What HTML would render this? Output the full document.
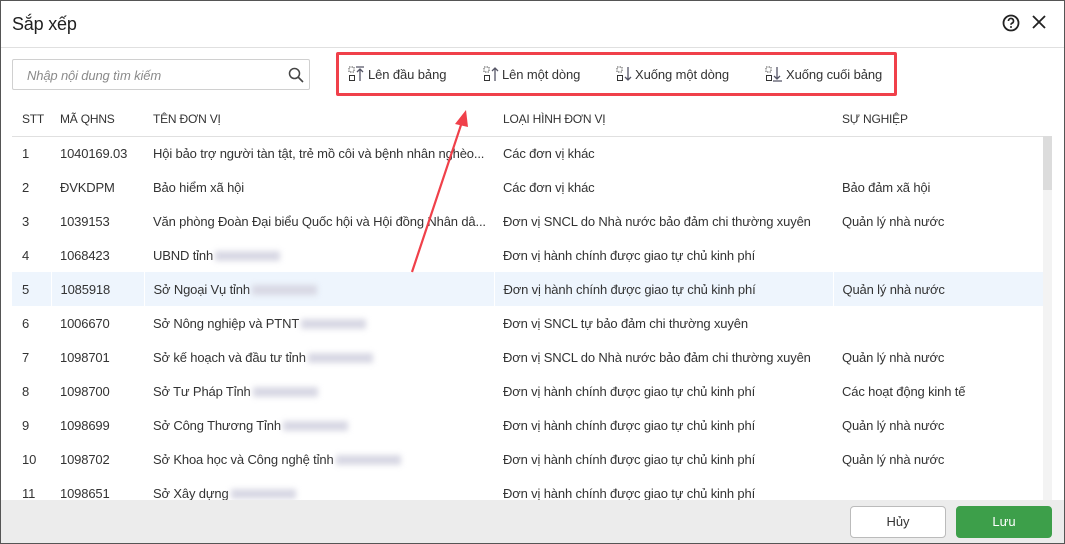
<!DOCTYPE html>
<html><head><meta charset="utf-8"><style>
*{box-sizing:border-box;margin:0;padding:0}
body{width:1065px;height:544px;overflow:hidden;background:#fff;font-family:"Liberation Sans",sans-serif;color:#212121;font-size:13px;position:relative}
.frame{position:absolute;left:0;top:0;width:1065px;height:544px;border:1px solid #555}
.title{position:absolute;left:12px;top:14px;font-size:18px;color:#212121;letter-spacing:-0.2px}
.hline{position:absolute;left:1px;right:1px;top:47px;border-top:1px solid #e0e0e0}
.search{position:absolute;left:12px;top:59px;width:298px;height:31px;border:1px solid #d0d0d0;border-radius:2px}
.search span{position:absolute;left:14px;top:8px;font-style:italic;color:#8a8a8a;font-size:13px;letter-spacing:-0.15px}
.tb{position:absolute;left:336px;top:52px;width:561px;height:44px;border:3px solid #f0404a;border-radius:2px}
.tbi{position:absolute;top:66px;font-size:13px;color:#333;display:flex;align-items:center;letter-spacing:-0.1px}
.tbi svg{margin-right:2px}
table{position:absolute;left:12px;top:102px;width:1031px;border-collapse:collapse;table-layout:fixed}
th{height:34px;text-align:left;font-weight:normal;font-size:12px;color:#333;padding-left:9px;border-bottom:1px solid #e0e0e0;letter-spacing:-0.2px}
td{height:34px;padding-left:9px;white-space:nowrap;overflow:hidden;font-size:13px;color:#333;letter-spacing:-0.15px}
td:first-child,th:first-child{padding-left:10px}
tr.sel td{background:#eef5fd;border-right:1px solid #fff}
.blur{display:inline-block;width:65px;height:10px;background:#d8d8e4;filter:blur(3px);vertical-align:middle;margin-left:2px}
.sb{position:absolute;left:1043px;top:136px;width:9px;height:364px;background:#f3f3f3}
.sb div{height:54px;background:#dcdcdc}
.foot{position:absolute;left:1px;right:1px;top:500px;height:43px;background:#ececec}
.btn{position:absolute;top:506px;height:32px;border-radius:4px;font-size:13px;text-align:center;line-height:30px}
</style></head><body>
<div class="frame"></div>
<div class="title">Sắp xếp</div>
<svg style="position:absolute;left:1002px;top:14px" width="18" height="18" viewBox="0 0 18 18"><circle cx="9" cy="9" r="7.5" fill="none" stroke="#222" stroke-width="1.8"/><path d="M6.5 7a2.5 2.5 0 1 1 3.3 2.3c-.6.3-.8.7-.8 1.4" fill="none" stroke="#222" stroke-width="1.7"/><circle cx="9" cy="13" r="1" fill="#222"/></svg>
<svg style="position:absolute;left:1031px;top:14px" width="16" height="16" viewBox="0 0 16 16"><path d="M2 2L14 14M14 2L2 14" stroke="#222" stroke-width="1.8"/></svg>
<div class="hline"></div>
<div class="search"><span>Nhập nội dung tìm kiếm</span>
<svg style="position:absolute;left:275px;top:7px" width="16" height="16" viewBox="0 0 16 16"><circle cx="6.5" cy="6.5" r="5" fill="none" stroke="#444" stroke-width="1.5"/><path d="M10 10l5 5" stroke="#444" stroke-width="1.6"/></svg></div>
<div class="tb"></div>
<div class="tbi" style="left:348px"><svg width="18" height="16" viewBox="0 0 18 16"><rect x="1" y="1" width="5" height="5" fill="none" stroke="#555" stroke-dasharray="1.5 1"/><rect x="1.5" y="9.5" width="5" height="5" fill="none" stroke="#333"/><path d="M8 1h8M12 3v12M9 6l3-3 3 3" fill="none" stroke="#556" stroke-width="1.3"/></svg>Lên đầu bảng</div>
<div class="tbi" style="left:483px"><svg width="17" height="16" viewBox="0 0 17 16"><rect x="1" y="1" width="5" height="5" fill="none" stroke="#555" stroke-dasharray="1.5 1"/><rect x="1.5" y="9.5" width="5" height="5" fill="none" stroke="#333"/><path d="M12 2v13M9 5l3-3 3 3" fill="none" stroke="#556" stroke-width="1.3"/></svg>Lên một dòng</div>
<div class="tbi" style="left:616px"><svg width="17" height="16" viewBox="0 0 17 16"><rect x="1" y="1" width="5" height="5" fill="none" stroke="#555" stroke-dasharray="1.5 1"/><rect x="1.5" y="9.5" width="5" height="5" fill="none" stroke="#333"/><path d="M12 1v13M9 11l3 3 3-3" fill="none" stroke="#556" stroke-width="1.3"/></svg>Xuống một dòng</div>
<div class="tbi" style="left:765px"><svg width="19" height="16" viewBox="0 0 19 16"><rect x="1" y="1" width="5" height="5" fill="none" stroke="#555" stroke-dasharray="1.5 1"/><rect x="1.5" y="9.5" width="5" height="5" fill="none" stroke="#333"/><path d="M12 1v12M9 10l3 3 3-3M8 15h9" fill="none" stroke="#556" stroke-width="1.3"/></svg>Xuống cuối bảng</div>
<table>
<colgroup><col style="width:39px"><col style="width:93px"><col style="width:350px"><col style="width:339px"><col style="width:210px"></colgroup>
<tr><th>STT</th><th>MÃ QHNS</th><th>TÊN ĐƠN VỊ</th><th>LOẠI HÌNH ĐƠN VỊ</th><th>SỰ NGHIỆP</th></tr>
<tr><td>1</td><td>1040169.03</td><td>Hội bảo trợ người tàn tật, trẻ mồ côi và bệnh nhân nghèo...</td><td>Các đơn vị khác</td><td></td></tr>
<tr><td>2</td><td>ĐVKDPM</td><td>Bảo hiểm xã hội</td><td>Các đơn vị khác</td><td>Bảo đảm xã hội</td></tr>
<tr><td>3</td><td>1039153</td><td>Văn phòng Đoàn Đại biểu Quốc hội và Hội đồng Nhân dâ...</td><td>Đơn vị SNCL do Nhà nước bảo đảm chi thường xuyên</td><td>Quản lý nhà nước</td></tr>
<tr><td>4</td><td>1068423</td><td>UBND tỉnh<span class="blur"></span></td><td>Đơn vị hành chính được giao tự chủ kinh phí</td><td></td></tr>
<tr class="sel"><td>5</td><td>1085918</td><td>Sở Ngoại Vụ tỉnh<span class="blur"></span></td><td>Đơn vị hành chính được giao tự chủ kinh phí</td><td>Quản lý nhà nước</td></tr>
<tr><td>6</td><td>1006670</td><td>Sở Nông nghiệp và PTNT<span class="blur"></span></td><td>Đơn vị SNCL tự bảo đảm chi thường xuyên</td><td></td></tr>
<tr><td>7</td><td>1098701</td><td>Sở kế hoạch và đầu tư tỉnh<span class="blur"></span></td><td>Đơn vị SNCL do Nhà nước bảo đảm chi thường xuyên</td><td>Quản lý nhà nước</td></tr>
<tr><td>8</td><td>1098700</td><td>Sở Tư Pháp Tỉnh<span class="blur"></span></td><td>Đơn vị hành chính được giao tự chủ kinh phí</td><td>Các hoạt động kinh tế</td></tr>
<tr><td>9</td><td>1098699</td><td>Sở Công Thương Tỉnh<span class="blur"></span></td><td>Đơn vị hành chính được giao tự chủ kinh phí</td><td>Quản lý nhà nước</td></tr>
<tr><td>10</td><td>1098702</td><td>Sở Khoa học và Công nghệ tỉnh<span class="blur"></span></td><td>Đơn vị hành chính được giao tự chủ kinh phí</td><td>Quản lý nhà nước</td></tr>
<tr><td>11</td><td>1098651</td><td>Sở Xây dựng<span class="blur"></span></td><td>Đơn vị hành chính được giao tự chủ kinh phí</td><td></td></tr>
</table>
<div class="sb"><div></div></div>
<svg style="position:absolute;left:0;top:0" width="1065" height="544"><path d="M412 272L462 122" stroke="#f0404a" stroke-width="2.2"/><path d="M466 110L455 124L468 127Z" fill="#f0404a"/></svg>
<div class="foot"></div>
<div class="btn" style="left:850px;width:96px;background:#fff;border:1px solid #bbb;color:#333">Hủy</div>
<div class="btn" style="left:956px;width:96px;background:#3d9f4a;color:#fff;border:1px solid #3d9f4a">Lưu</div>
</body></html>
